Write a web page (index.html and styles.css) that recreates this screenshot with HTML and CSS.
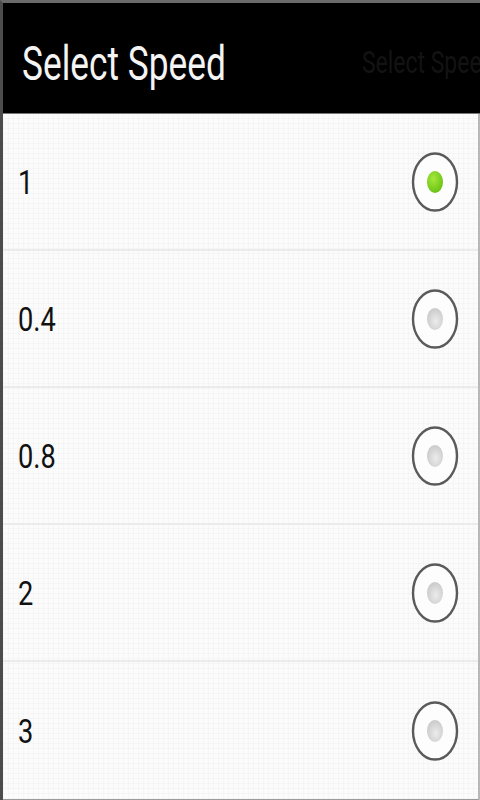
FILE: index.html
```html
<!DOCTYPE html>
<html lang="en">
<head>
    <meta charset="UTF-8">
    <meta name="viewport" content="width=device-width, initial-scale=1.0">
    <title>Select Speed</title>
    <link rel="stylesheet" href="styles.css">
</head>
<body>
    <div class="dialog">
        <div class="judul">
            <span class="judul-teks">Select Speed</span>
            <span class="judul-bayangan">Select Speed</span>
        </div>
        <ul class="daftar">
            <li class="baris">
                <span class="angka">1</span>
                <svg class="radio" width="48" height="62" viewBox="0 0 48 62">
                    <defs>
                        <radialGradient id="hijau" cx="40%" cy="35%" r="70%">
                            <stop offset="0" stop-color="#a6e83c"/>
                            <stop offset="1" stop-color="#66c010"/>
                        </radialGradient>
                    </defs>
                    <ellipse cx="24" cy="31" rx="22" ry="28.5" fill="#fdfdfd" stroke="#5a5a5a" stroke-width="2.4"/>
                    <ellipse cx="24" cy="31" rx="8" ry="11" fill="url(#hijau)"/>
                </svg>
            </li>
            <li class="baris">
                <span class="angka">0.4</span>
                <svg class="radio" width="48" height="62" viewBox="0 0 48 62">
                    <defs>
                        <radialGradient id="abu1" cx="55%" cy="60%" r="70%">
                            <stop offset="0" stop-color="#ececec"/>
                            <stop offset="1" stop-color="#c4c4c4"/>
                        </radialGradient>
                    </defs>
                    <ellipse cx="24" cy="31" rx="22" ry="28.5" fill="#fdfdfd" stroke="#5a5a5a" stroke-width="2.4"/>
                    <ellipse cx="24" cy="31" rx="8" ry="11" fill="url(#abu1)"/>
                </svg>
            </li>
            <li class="baris">
                <span class="angka">0.8</span>
                <svg class="radio" width="48" height="62" viewBox="0 0 48 62">
                    <ellipse cx="24" cy="31" rx="22" ry="28.5" fill="#fdfdfd" stroke="#5a5a5a" stroke-width="2.4"/>
                    <ellipse cx="24" cy="31" rx="8" ry="11" fill="url(#abu1)"/>
                </svg>
            </li>
            <li class="baris">
                <span class="angka">2</span>
                <svg class="radio" width="48" height="62" viewBox="0 0 48 62">
                    <ellipse cx="24" cy="31" rx="22" ry="28.5" fill="#fdfdfd" stroke="#5a5a5a" stroke-width="2.4"/>
                    <ellipse cx="24" cy="31" rx="8" ry="11" fill="url(#abu1)"/>
                </svg>
            </li>
            <li class="baris">
                <span class="angka">3</span>
                <svg class="radio" width="48" height="62" viewBox="0 0 48 62">
                    <ellipse cx="24" cy="31" rx="22" ry="28.5" fill="#fdfdfd" stroke="#5a5a5a" stroke-width="2.4"/>
                    <ellipse cx="24" cy="31" rx="8" ry="11" fill="url(#abu1)"/>
                </svg>
            </li>
        </ul>
    </div>
</body>
</html>
```

FILE: styles.css
```css
*{
    box-sizing: border-box;
}

body{
    margin: 0;
    width: 480px;
    height: 800px;
    overflow: hidden;
    font-family: Roboto, "Liberation Sans", sans-serif;
    background-color: #000;
}

.dialog{
    height: 800px;
    display: flex;
    flex-direction: column;
    border-top: 3px solid #6a6a6a;
    border-left: 3px solid #4c4c4c;
}

.judul{
    position: relative;
    height: 111px;
    flex-shrink: 0;
    display: flex;
    align-items: center;
    padding: 10px 0 0 19px;
    background-color: #000;
    border-bottom: 1px solid #777;
    overflow: hidden;
}

.judul-teks{
    display: inline-block;
    color: #f4f4f4;
    font-size: 49px;
    white-space: nowrap;
    transform: scaleX(0.72);
    transform-origin: left center;
}

/* sisa teks judul yang samar di kanan */
.judul-bayangan{
    position: absolute;
    left: 359px;
    top: 41px;
    color: #131313;
    font-size: 31px;
    white-space: nowrap;
    transform: scaleX(0.74);
    transform-origin: left center;
}

.daftar{
    list-style: none;
    margin: 0;
    padding: 0;
    flex: 1;
    border-right: 2px solid #b8b8b8;
    border-bottom: 2px solid #9a9a9a;
    background-color: #fbfbfb;
    background-image:
        repeating-linear-gradient(90deg, rgba(0,0,0,0.018) 0 1px, transparent 1px 5px),
        repeating-linear-gradient(0deg, rgba(0,0,0,0.018) 0 1px, transparent 1px 5px);
}

.baris{
    height: 137px;
    display: flex;
    align-items: center;
    justify-content: space-between;
    padding: 0 19px 0 15px;
    border-bottom: 2px solid #ebebeb;
}

.baris:last-child{
    border-bottom: none;
}

.angka{
    display: inline-block;
    color: #111;
    font-size: 34px;
    transform: scaleX(0.8);
    transform-origin: left center;
}

.radio{
    display: block;
}
```
